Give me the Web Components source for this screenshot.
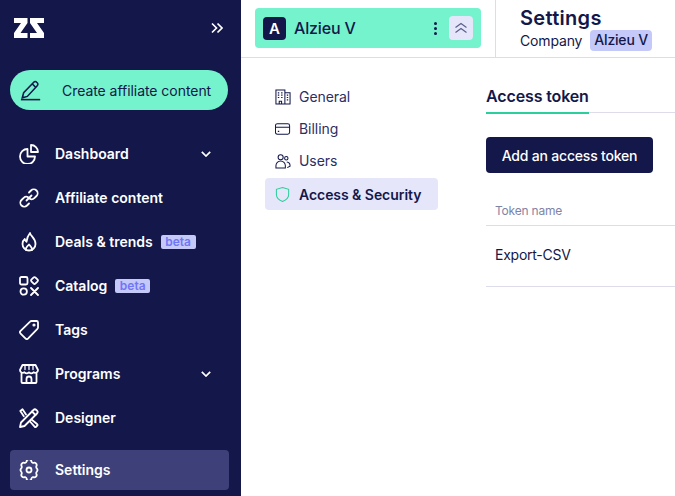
<!DOCTYPE html>
<html>
<head>
<meta charset="utf-8">
<title>Settings</title>
<style>
  html, body { margin: 0; height: 100%; overflow: hidden; background: #fff; }
  body { font-family: Inter, "Liberation Sans", sans-serif; color: #13174a; }
</style>
</head>
<body>
<app-shell>
  <side-bar slot="side">
    <nav-item label="Dashboard" icon="dashboard" caret></nav-item>
    <nav-item label="Affiliate content" icon="link"></nav-item>
    <nav-item label="Deals &amp; trends" icon="flame" beta></nav-item>
    <nav-item label="Catalog" icon="catalog" beta></nav-item>
    <nav-item label="Tags" icon="tag"></nav-item>
    <nav-item label="Programs" icon="shop" caret></nav-item>
    <nav-item label="Designer" icon="designer"></nav-item>
    <nav-item label="Settings" icon="gear" active></nav-item>
  </side-bar>
  <top-head slot="head"></top-head>
  <settings-menu slot="menu">
    <menu-item label="General" icon="building"></menu-item>
    <menu-item label="Billing" icon="card"></menu-item>
    <menu-item label="Users" icon="users"></menu-item>
    <menu-item label="Access &amp; Security" icon="shield" active></menu-item>
  </settings-menu>
  <token-panel slot="panel"></token-panel>
</app-shell>

<script>
// all nav icons sit in a 20x20 box
const NAV_ICONS = {
  dashboard: '<path d="M8.500 5.500a7.500 7.500 0 1 0 7.500 7.500H8.500z" transform="translate(0 -.5)"/><path d="M12 1a7 7 0 0 1 7 7h-7z"/>',
  link: '<path d="M7.500 12.500l5-5"/><path d="M10 4.500l2-2a3.800 3.800 0 0 1 5.500 5.500l-2.200 2.200a3.800 3.800 0 0 1-4.800.4"/><path d="M10 15.500l-2 2a3.800 3.800 0 0 1-5.500-5.500l2.200-2.200a3.800 3.800 0 0 1 4.800-.4"/>',
  flame: '<path d="M11 1c.3 3 5.500 5 5.500 11a6.500 6.500 0 0 1-13 0c0-2.400 1-4 2.300-5 .2 1.500.8 2.300 1.700 2.800C7.800 6.800 9 3.500 11 1z"/><path d="M7 18c-.8-2.500 1-3 3-5.500 1.500 2 3.500 3 3 5.500"/>',
  catalog: '<rect x="1" y="1" width="7.500" height="7.500" rx="1.500"/><rect x="12.700" y="1.700" width="5.600" height="5.600" rx="1.500" transform="rotate(45 15.500 4.500)"/><circle cx="4.700" cy="15.500" r="3.200"/><path d="M12 12l7 7M19 12l-7 7"/>',
  tag: '<path d="M12.500 1h5a1.500 1.500 0 0 1 1.500 1.500v5a2 2 0 0 1-.6 1.400L9.200 18.400a2 2 0 0 1-2.800 0l-4.800-4.800a2 2 0 0 1 0-2.800L11.100 1.600A2 2 0 0 1 12.500 1z"/><circle cx="15" cy="5" r=".7"/>',
  shop: '<path d="M2.500 9.500V18a1 1 0 0 0 1 1h13a1 1 0 0 0 1-1V9.500"/><path d="M3.500 1h13L19 6a2.800 2.800 0 0 1-4.500 2.300 3.300 3.300 0 0 1-4.500 0 3.300 3.300 0 0 1-4.500 0A2.800 2.800 0 0 1 1 6z"/><path d="M7.500 19v-4a2.500 2.500 0 0 1 5 0v4"/><path d="M6 1.500v4M10 1.500v4M14 1.500v4" stroke-width="1.300"/>',
  designer: '<path d="M1 19l1-4.500L14.500 2a2 2 0 0 1 2.800 0l.7.700a2 2 0 0 1 0 2.800L5.500 18z"/><path d="M13 3.500l3.500 3.500"/><path d="M7 6.500L3.500 1.300 1.300 3l3.500 5.200"/><path d="M12.500 11.500l5.800 4.800a.800.800 0 0 1 0 1.200l-1.300 1.300a.800.800 0 0 1-1.200 0l-4.800-5.300"/>',
  gear: '<path d="M7.600 1.500a2.400 2.400 0 0 1 4.800 0 2.400 2.400 0 0 0 1.600 1.500 2.400 2.400 0 0 1 3.300 3.300 2.400 2.400 0 0 0 .6 2.200 2.400 2.400 0 0 1 0 3 2.400 2.400 0 0 0-.6 2.200A2.400 2.400 0 0 1 14 17a2.400 2.400 0 0 0-1.600 1.500 2.400 2.400 0 0 1-4.800 0A2.400 2.400 0 0 0 6 17a2.400 2.400 0 0 1-3.300-3.300 2.400 2.400 0 0 0-.6-2.200 2.400 2.400 0 0 1 0-3 2.400 2.400 0 0 0 .6-2.200A2.400 2.400 0 0 1 6 3a2.400 2.400 0 0 0 1.600-1.500z"/><circle cx="10" cy="10" r="2.500"/>'
};

const MENU_ICONS = {
  building: '<path d="M1 15.500V.5h9.500v15M10.500 3.500h5.500v12M.5 15.500h16"/><path d="M4.500 15.500v-3h2.500v3"/><path d="M3 3.500h1.500M6.500 3.500H8M3 6h1.500M6.500 6H8M3 8.500h1.500M6.500 8.500H8M12.500 6H14M12.500 8.500H14M12.500 11H14" stroke-width="1.300"/>',
  card: '<rect x=".5" y="2.500" width="15" height="11" rx="2"/><path d="M.5 6h15M3 10.500h1.500"/>',
  users: '<circle cx="6" cy="4" r="2.700"/><path d="M1 15.500V13a5 5 0 0 1 10 0v2.500z"/><circle cx="12" cy="5" r="1.800"/><path d="M12.500 9a4 4 0 0 1 3.500 4v.500l-3 1.500"/>',
  shield: '<path d="M8 1l6.500 2v5.500c0 3.500-2.800 6-6.500 7.500-3.700-1.500-6.500-4-6.500-7.500V3z"/>'
};

class AppShell extends HTMLElement {
  constructor() {
    super();
    this.attachShadow({mode: "open"}).innerHTML = `
      <style>
        :host { display: grid; grid-template-columns: 241px 1fr; height: 496px; width: 675px; overflow: hidden; }
        .main { display: flex; flex-direction: column; min-width: 0; overflow: hidden; }
        .body { display: flex; padding: 23px 0 0 24px; gap: 48px; }
        ::slotted([slot=panel]) { flex: 1; }
      </style>
      <slot name="side"></slot>
      <div class="main">
        <slot name="head"></slot>
        <div class="body">
          <slot name="menu"></slot>
          <slot name="panel"></slot>
        </div>
      </div>`;
  }
}

class SideBar extends HTMLElement {
  constructor() {
    super();
    this.attachShadow({mode: "open"}).innerHTML = `
      <style>
        :host { display: block; background: #13174a; color: #fff; height: 496px; box-sizing: border-box; }
        .top { display: flex; justify-content: space-between; align-items: center; height: 20px; padding: 18px 18px 0 14px; }
        .create {
          display: flex; align-items: center; box-sizing: border-box; height: 40px; width: 218px;
          margin: 32px 0 22px 10px; padding-left: 10px; border-radius: 20px;
          background: #74f3cd; color: #13174a; font-size: 14px;
        }
        .create span { margin-left: 20px; letter-spacing: -.05px; }
        .create svg { flex: none; }
        .items { display: flex; flex-direction: column; }
      </style>
      <div class="top">
        <svg width="30" height="20" viewBox="0 0 30 20" fill="#fff">
          <path d="M0 0h13.500v5L6.500 15h7v5H0v-5L7 5H0z"/>
          <path d="M16 0h14v5h-7l7 10v5H16v-5h7L16 5z"/>
        </svg>
        <svg width="12" height="12" viewBox="0 0 12 12" fill="none" stroke="#fff" stroke-width="1.700">
          <path d="M1 1.500L5.500 6 1 10.500M6.500 1.500L11 6l-4.500 4.500"/>
        </svg>
      </div>
      <div class="create">
        <svg width="22" height="22" viewBox="0 0 24 24" fill="none" stroke="#13174a" stroke-width="1.700">
          <path d="M2.500 20.500l1.500-5.500L15 3.500a2.200 2.200 0 0 1 3.200 0l.6.600a2.200 2.200 0 0 1 0 3.200L8 19z"/>
          <path d="M13.500 5.500l3.800 3.800"/>
          <path d="M1 22.500h21"/>
        </svg>
        <span>Create affiliate content</span>
      </div>
      <div class="items"><slot></slot></div>`;
  }
}

class NavItem extends HTMLElement {
  connectedCallback() {
    const icon = NAV_ICONS[this.getAttribute("icon")] || "";
    const beta = this.hasAttribute("beta") ? '<em>beta</em>' : '';
    const caret = this.hasAttribute("caret")
      ? '<svg class="caret" width="10" height="6" viewBox="0 0 10 6" fill="none" stroke="#fff" stroke-width="1.700"><path d="M.8.8L5 5 9.200.8"/></svg>'
      : '';
    this.attachShadow({mode: "open"}).innerHTML = `
      <style>
        :host { display: block; }
        .row {
          display: flex; align-items: center; height: 44px; margin-left: 10px; width: 219px;
          box-sizing: border-box; padding-left: 9px; font-size: 14px; font-weight: 600; letter-spacing: 0;
        }
        :host([active]) .row { height: 40px; margin-top: 10px; background: #3d4079; border-radius: 4px; }
        .row span { padding-bottom: 2px; }
        svg.i { flex: none; margin-right: 16px; }
        em {
          font-style: normal; font-size: 12px; font-weight: 600; letter-spacing: 0; color: #7176f5; background: #c5c9f9;
          border-radius: 2px; padding: 0 4.500px; height: 14px; line-height: 14px; margin-left: 8px;
        }
        .caret { margin-left: auto; margin-right: 18px; }
      </style>
      <div class="row">
        <svg class="i" width="20" height="20" viewBox="0 0 20 20" fill="none" stroke="#fff" stroke-width="1.800" stroke-linejoin="round" stroke-linecap="round">${icon}</svg>
        <span>${this.getAttribute("label")}</span>${beta}${caret}
      </div>`;
  }
}

class TopHead extends HTMLElement {
  constructor() {
    super();
    this.attachShadow({mode: "open"}).innerHTML = `
      <style>
        :host { display: flex; height: 58px; box-sizing: border-box; border-bottom: 1px solid #dcdcea; flex: none; }
        .left { width: 255px; box-sizing: border-box; padding: 8px 14px 0 14px; border-right: 1px solid #dcdcea; flex: none; }
        .acct {
          display: flex; align-items: center; height: 40px; border-radius: 4px; background: #74f3cd;
          padding: 0 8px; box-sizing: border-box;
        }
        .tile {
          width: 23px; height: 23px; border-radius: 4px; background: #13174a; color: #fff;
          display: flex; align-items: center; justify-content: center; font-size: 15px; font-weight: 600;
        }
        .name { margin-left: 8px; font-size: 16px; font-weight: 500; flex: 1; letter-spacing: -.15px; }
        .dots { display: flex; flex-direction: column; gap: 2px; margin-right: 12px; }
        .dots i { width: 3px; height: 3px; border-radius: 50%; background: #13174a; }
        .fold {
          width: 24px; height: 24px; border-radius: 4px; background: #e6e6fa;
          display: flex; align-items: center; justify-content: center;
        }
        .title { padding: 7px 0 0 24px; }
        h1 { margin: 0; font-size: 20px; line-height: 23px; font-weight: 600; letter-spacing: .3px; }
        .sub { display: flex; align-items: center; gap: 8px; font-size: 14px; height: 21px; letter-spacing: -.15px; }
        .sub span:first-child { padding-bottom: 1px; }
        .pill { background: #c5c9f9; border-radius: 4px; padding: 0 4px; height: 21px; line-height: 20px; font-weight: 500; letter-spacing: -.2px; }
      </style>
      <div class="left">
        <div class="acct">
          <div class="tile">A</div>
          <div class="name">Alzieu V</div>
          <div class="dots"><i></i><i></i><i></i></div>
          <div class="fold">
            <svg width="12" height="12" viewBox="0 0 12 12" fill="none" stroke="#5c5f8a" stroke-width="1.200"><path d="M.5 5.500L6 1.500l5.500 4M.5 10.500L6 6.500l5.500 4"/></svg>
          </div>
        </div>
      </div>
      <div class="title">
        <h1>Settings</h1>
        <div class="sub"><span>Company</span><span class="pill">Alzieu V</span></div>
      </div>`;
  }
}

class SettingsMenu extends HTMLElement {
  constructor() {
    super();
    this.attachShadow({mode: "open"}).innerHTML = `
      <style>:host { display: flex; flex-direction: column; width: 173px; flex: none; }</style>
      <slot></slot>`;
  }
}

class MenuItem extends HTMLElement {
  connectedCallback() {
    const icon = MENU_ICONS[this.getAttribute("icon")] || "";
    this.attachShadow({mode: "open"}).innerHTML = `
      <style>
        :host { display: block; }
        .row { display: flex; align-items: center; height: 32px; padding-left: 10px; font-size: 14px; border-radius: 4px; color: #2b2f63; letter-spacing: -.05px; }
        .row span { padding-bottom: 2px; }
        :host([active]) .row { background: #e6e6fa; color: #13174a; font-weight: 600; margin-top: 1px; letter-spacing: -.05px; }
        :host([active]) .row span { padding: 1px 0 0; }
        svg { flex: none; margin-right: 8px; stroke: #13174a; }
        :host([active]) svg { stroke: #2bcf9c; }
      </style>
      <div class="row">
        <svg width="16" height="17" viewBox="0 0 17 17" fill="none" stroke-width="1.100">${icon}</svg>
        <span>${this.getAttribute("label")}</span>
      </div>`;
  }
}

class TokenPanel extends HTMLElement {
  constructor() {
    super();
    this.attachShadow({mode: "open"}).innerHTML = `
      <style>
        :host { display: block; min-width: 0; padding-top: 5px; }
        .tabs { border-bottom: 1px solid #dcdcea; height: 27px; box-sizing: border-box; }
        .tab { display: inline-block; height: 27px; box-sizing: border-box; border-bottom: 2px solid #2bcf9c; font-size: 16px; font-weight: 600; line-height: 18px; letter-spacing: -.13px; }
        button {
          display: block; margin: 24px 0 29px; height: 36px; width: 167px; border: 0; border-radius: 4px;
          background: #13174a; color: #fff; font: 500 14px Inter, "Liberation Sans", sans-serif; letter-spacing: -.2px;
        }
        .th { height: 23px; padding-left: 9px; font-size: 12px; color: #8183a5; border-bottom: 1px solid #dcdcea; line-height: 18px; letter-spacing: -.2px; }
        .td { height: 61px; padding: 0 0 3px 9px; box-sizing: border-box; font-size: 14px; display: flex; align-items: center; border-bottom: 1px solid #dcdcea; letter-spacing: -.25px; }
      </style>
      <div class="tabs"><span class="tab">Access token</span></div>
      <button>Add an access token</button>
      <div class="th">Token name</div>
      <div class="td">Export-CSV</div>`;
  }
}

customElements.define("app-shell", AppShell);
customElements.define("side-bar", SideBar);
customElements.define("nav-item", NavItem);
customElements.define("top-head", TopHead);
customElements.define("settings-menu", SettingsMenu);
customElements.define("menu-item", MenuItem);
customElements.define("token-panel", TokenPanel);
</script>
</body>
</html>
